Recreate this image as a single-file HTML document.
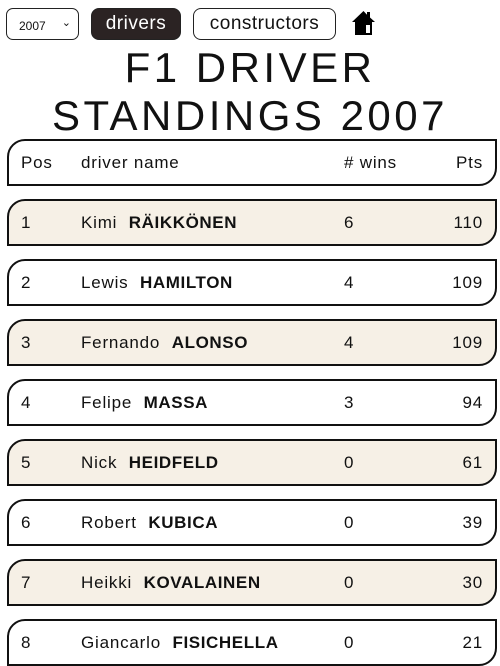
<!DOCTYPE html>
<html><head><meta charset="utf-8"><style>
*{box-sizing:border-box;margin:0;padding:0}
body{width:500px;height:650px;overflow:hidden;background:#fff;font-family:"Liberation Sans",sans-serif;color:#111;position:relative}
.sel{position:absolute;left:6px;top:8px;width:73px;height:32px;border:1px solid #222;border-radius:7px;font-size:12px;padding:10px 0 0 12px}
.sel span{position:absolute;right:7px;top:7px;font-size:11px}
.btn{position:absolute;top:8px;height:32px;border:1px solid #222;border-radius:8px;font-size:19px;line-height:30px;text-align:center;letter-spacing:.5px}
.b1{left:91px;width:90px;background:#2b2323;color:#fff}
.b2{left:193px;width:143px}
h1{position:absolute;top:44px;left:0;width:500px;text-align:center;font-weight:normal;font-size:42px;line-height:48px;letter-spacing:3.5px}
.row{position:absolute;left:7px;width:490px;height:47px;border:2px solid #111;border-radius:18px 0 18px 0;font-size:17px;letter-spacing:.8px}
.row.o{background:#f6f0e6}
.row div{position:absolute;top:12px}
.p{left:12px}.n{left:72px}.w{left:335px}.t{right:12px}
b{margin-left:6px;letter-spacing:.6px}
</style></head><body>
<div class="sel">2007<span>&#8964;</span></div>
<div class="btn b1">drivers</div>
<div class="btn b2">constructors</div>
<svg style="position:absolute;left:351px;top:10px" width="25" height="26" viewBox="0 0 25 26"><path d="M12.5 1 L1 12 L4 12 L4 25 L21 25 L21 12 L24 12 L19 7.5 L19 2 L16 2 L16 4.8 Z" fill="#000"/><rect x="15" y="15" width="4" height="8" fill="#fff"/></svg>
<h1>F1 DRIVER<br>STANDINGS 2007</h1>
<div class="row" style="top:139px"><div class="p">Pos</div><div class="n">driver name</div><div class="w">#&nbsp;wins</div><div class="t">Pts</div></div>
<div class="row o" style="top:199px"><div class="p">1</div><div class="n">Kimi <b>RÄIKKÖNEN</b></div><div class="w">6</div><div class="t">110</div></div>
<div class="row" style="top:259px"><div class="p">2</div><div class="n">Lewis <b>HAMILTON</b></div><div class="w">4</div><div class="t">109</div></div>
<div class="row o" style="top:319px"><div class="p">3</div><div class="n">Fernando <b>ALONSO</b></div><div class="w">4</div><div class="t">109</div></div>
<div class="row" style="top:379px"><div class="p">4</div><div class="n">Felipe <b>MASSA</b></div><div class="w">3</div><div class="t">94</div></div>
<div class="row o" style="top:439px"><div class="p">5</div><div class="n">Nick <b>HEIDFELD</b></div><div class="w">0</div><div class="t">61</div></div>
<div class="row" style="top:499px"><div class="p">6</div><div class="n">Robert <b>KUBICA</b></div><div class="w">0</div><div class="t">39</div></div>
<div class="row o" style="top:559px"><div class="p">7</div><div class="n">Heikki <b>KOVALAINEN</b></div><div class="w">0</div><div class="t">30</div></div>
<div class="row" style="top:619px"><div class="p">8</div><div class="n">Giancarlo <b>FISICHELLA</b></div><div class="w">0</div><div class="t">21</div></div>
</body></html>
